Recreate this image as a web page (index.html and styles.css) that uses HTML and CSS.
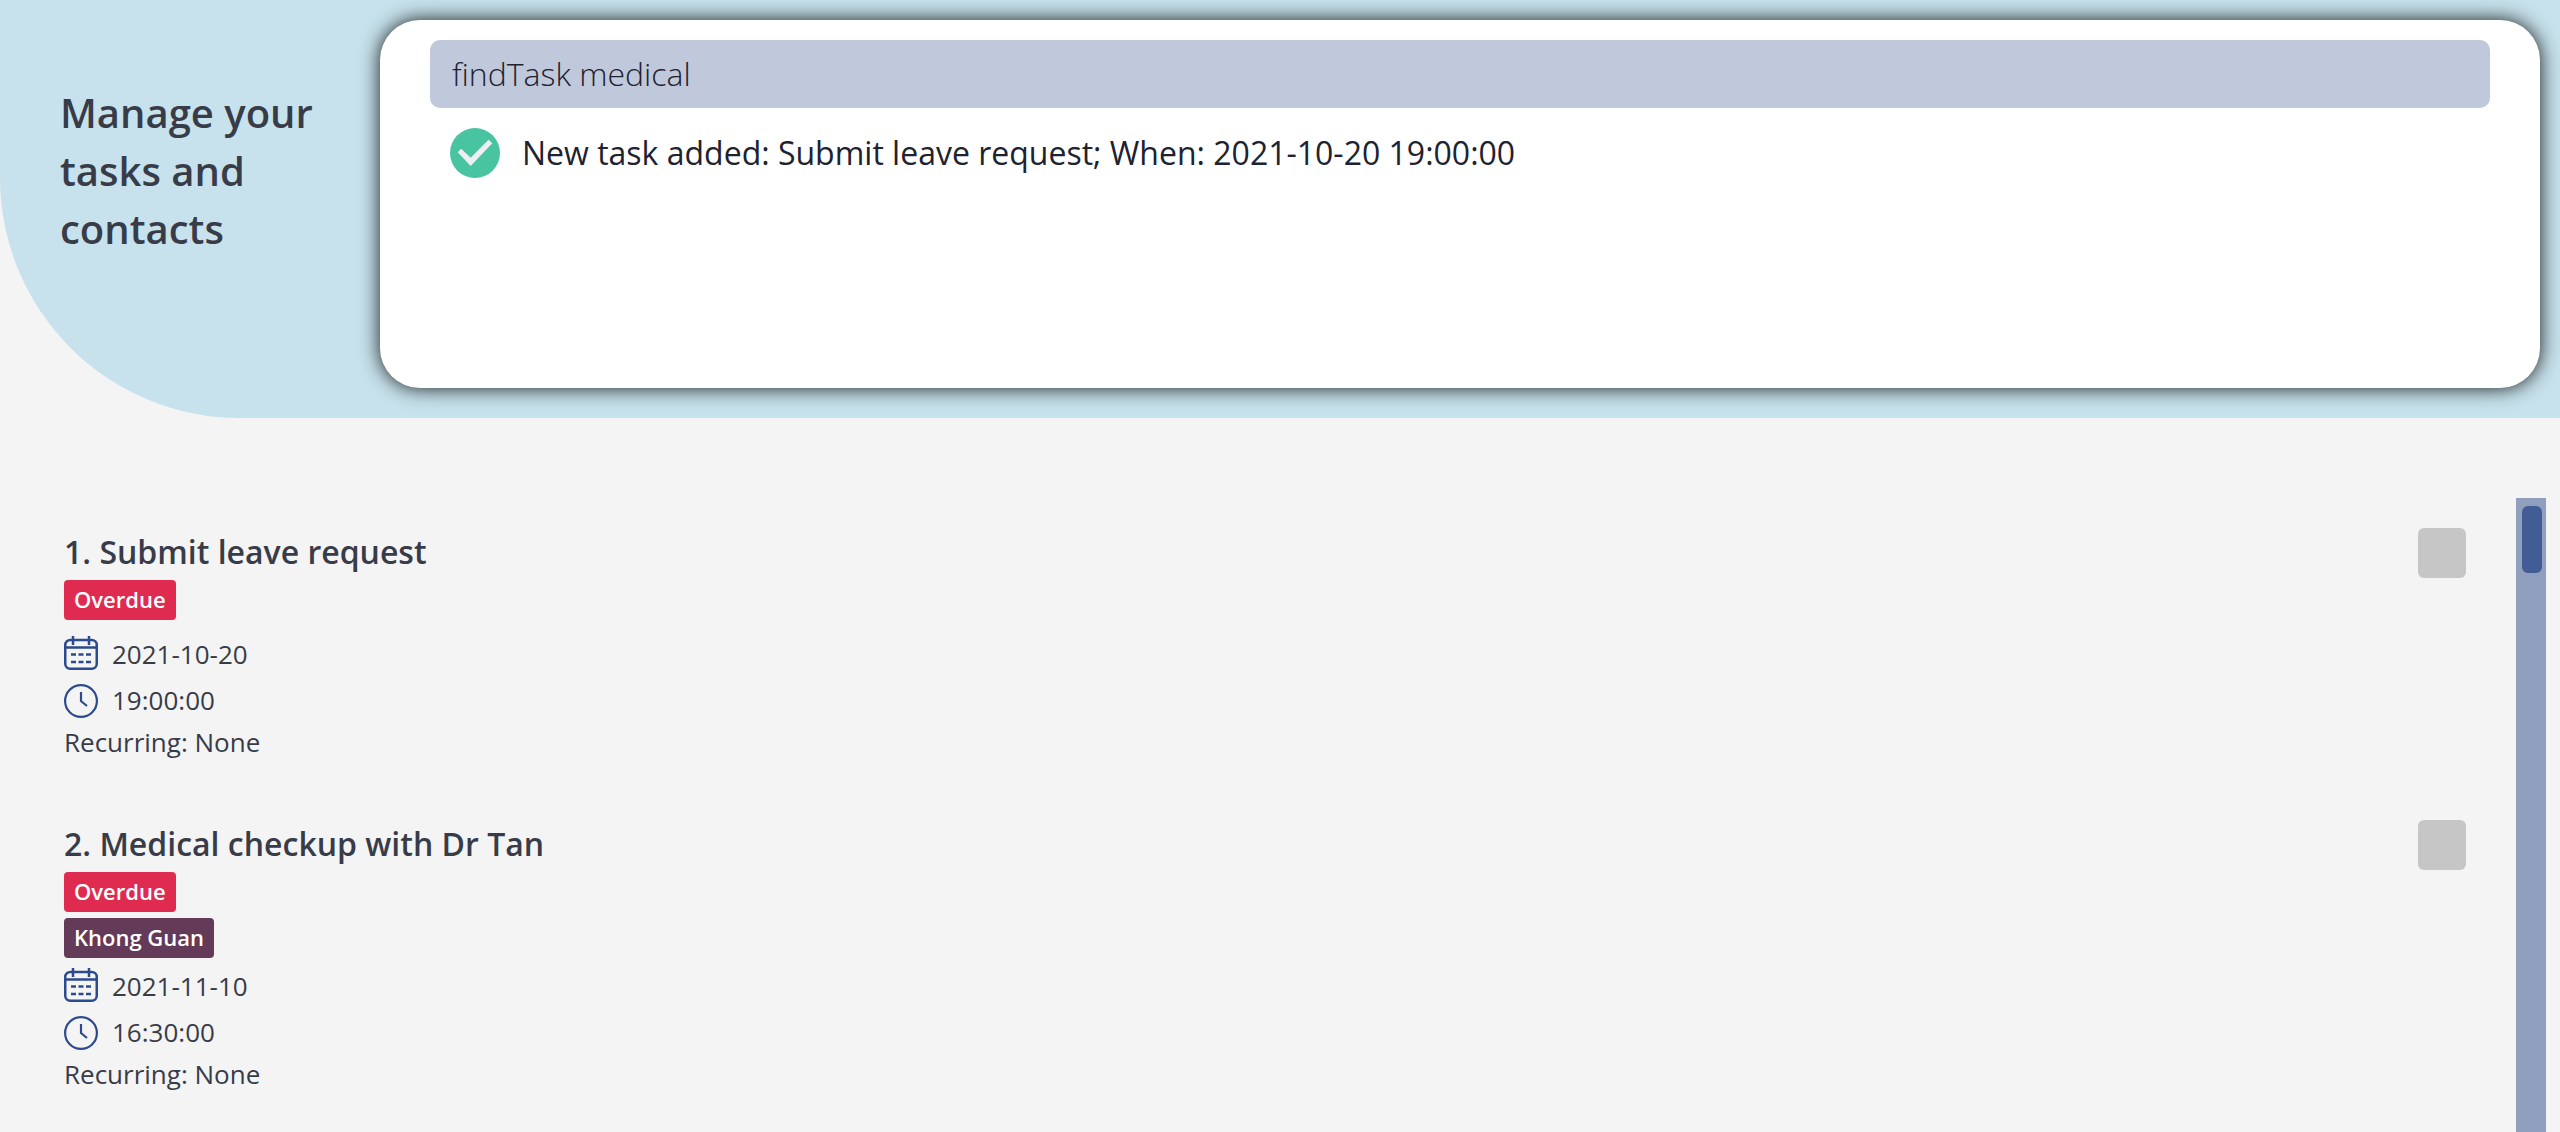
FILE: index.html
```html
<!DOCTYPE html>
<html lang="en">
<head>
<meta charset="utf-8">
<meta name="viewport" content="width=device-width, initial-scale=1">
<title>Tasks and contacts</title>
<link rel="stylesheet" href="styles.css">
</head>
<body>
<svg class="sprite" aria-hidden="true">
  <symbol id="calendar" viewBox="0 0 34 36">
    <g fill="none" stroke="currentColor" stroke-width="2.500">
      <rect x="1.250" y="4" width="31.500" height="28.750" rx="5"/>
      <path d="M1 11.500H33M9 0V9M25 0V9"/>
      <path d="M7 18.500h5M14.500 18.500h5M22 18.500h5M7 26h5M14.500 26h5M22 26h5"/>
    </g>
  </symbol>
  <symbol id="clock" viewBox="0 0 34 36">
    <g fill="none" stroke="currentColor" stroke-width="2.200">
      <circle cx="17" cy="19" r="15.900"/>
      <path d="M17 10V19L23 24"/>
    </g>
  </symbol>
</svg>

<header class="banner">
  <h1 class="banner-title">Manage your tasks and contacts</h1>
  <section class="console">
    <input class="command" type="text" value="findTask medical" aria-label="Command">
    <p class="result">
      <svg class="result-icon" viewBox="0 0 50 50" aria-hidden="true">
        <circle cx="25" cy="25" r="25" fill="#48c4a1"/>
        <path d="M7.700 24.300L11.200 20.800L20.700 29.700L38.500 11.700L42.300 15.200L20.700 38Z" fill="#ecf0f1"/>
      </svg>
      <span>New task added: Submit leave request; When: 2021-10-20 19:00:00</span>
    </p>
  </section>
</header>

<main class="board">
  <ol class="tasks">
    <li class="task">
      <div class="task-body">
        <h2 class="task-title"><label for="done-1">1. Submit leave request</label></h2>
        <span class="badge badge-overdue">Overdue</span>
        <div class="tags"></div>
        <div class="detail"><svg class="detail-icon" aria-hidden="true"><use href="#calendar"/></svg><span>2021-10-20</span></div>
        <div class="detail"><svg class="detail-icon" aria-hidden="true"><use href="#clock"/></svg><span>19:00:00</span></div>
        <p class="recurring">Recurring: None</p>
      </div>
      <input class="done" type="checkbox" id="done-1">
    </li>
    <li class="task">
      <div class="task-body">
        <h2 class="task-title"><label for="done-2">2. Medical checkup with Dr Tan</label></h2>
        <span class="badge badge-overdue">Overdue</span>
        <div class="tags"><span class="badge badge-contact">Khong Guan</span></div>
        <div class="detail"><svg class="detail-icon" aria-hidden="true"><use href="#calendar"/></svg><span>2021-11-10</span></div>
        <div class="detail"><svg class="detail-icon" aria-hidden="true"><use href="#clock"/></svg><span>16:30:00</span></div>
        <p class="recurring">Recurring: None</p>
      </div>
      <input class="done" type="checkbox" id="done-2">
    </li>
  </ol>
  <div class="scroll-track"><div class="scroll-thumb"></div></div>
</main>
</body>
</html>
```
FILE: styles.css
```css
* {
  box-sizing: border-box;
}

body {
  margin: 0;
  min-height: 100vh;
  display: flex;
  flex-direction: column;
  gap: 80px;
  background: #f4f4f4;
  color: #383c48;
  font: 26px/36px "Open Sans", "Noto Sans", sans-serif;
}

h1, h2, p, ol {
  margin: 0;
  padding: 0;
}

.sprite {
  display: none;
}

/* Banner */
.banner {
  display: flex;
  padding: 20px 20px 30px 60px;
  background: #c7e2ec;
  border-bottom-left-radius: 240px;
}

.banner-title {
  flex: 0 0 320px;
  padding: 64px 40px 0 0;
  font-size: 40px;
  line-height: 58px;
  font-weight: 600;
}

.console {
  flex: 1;
  min-width: 0;
  min-height: 368px;
  padding: 20px 50px;
  border-radius: 40px;
  background: #fff;
  box-shadow: 0 0 20px rgba(0, 0, 0, 0.9);
}

.command {
  display: block;
  width: 100%;
  height: 68px;
  padding: 0 22px 2px;
  border: 0;
  border-radius: 10px;
  background: #c0c8db;
  color: #20222f;
  font: 300 32px/44px "Open Sans", "Noto Sans", sans-serif;
}

.result {
  display: flex;
  align-items: center;
  gap: 22px;
  padding: 20px;
  color: #20222f;
  font-size: 32px;
  line-height: 44px;
}

.result-icon {
  flex: none;
  width: 50px;
  height: 50px;
}

/* Task list */
.board {
  flex: 1;
  display: flex;
  padding: 0 14px 0 64px;
}

.tasks {
  flex: 1;
  list-style: none;
}

.task {
  display: flex;
  align-items: flex-start;
  justify-content: space-between;
  padding: 30px 50px 30px 0;
}

.task-body {
  display: flex;
  flex-direction: column;
  align-items: flex-start;
  gap: 6px;
  padding-top: 2px;
}

.task-title {
  font-size: 32px;
  line-height: 44px;
  font-weight: 600;
}

.tags {
  display: flex;
  gap: 6px;
}

.badge {
  padding: 3px 10px 5px;
  border-radius: 4px;
  color: #fff;
  font-size: 22px;
  line-height: 32px;
  font-weight: 600;
}

.badge-overdue {
  background: #e02b50;
}

.badge-contact {
  background: #633a58;
}

.detail {
  display: flex;
  gap: 14px;
  padding-top: 4px;
}

.detail-icon {
  width: 34px;
  height: 36px;
  color: #2c4a8e;
}

.done {
  appearance: none;
  width: 48px;
  height: 50px;
  margin: 0;
  border-radius: 6px;
  background: #c6c6c6;
}

.done:checked {
  background: #48c4a1;
}

.scroll-track {
  width: 30px;
  padding: 8px 4px 8px 6px;
  background: #919fbf;
}

.scroll-thumb {
  height: 67px;
  border-radius: 6px;
  background: #425c96;
}
```
